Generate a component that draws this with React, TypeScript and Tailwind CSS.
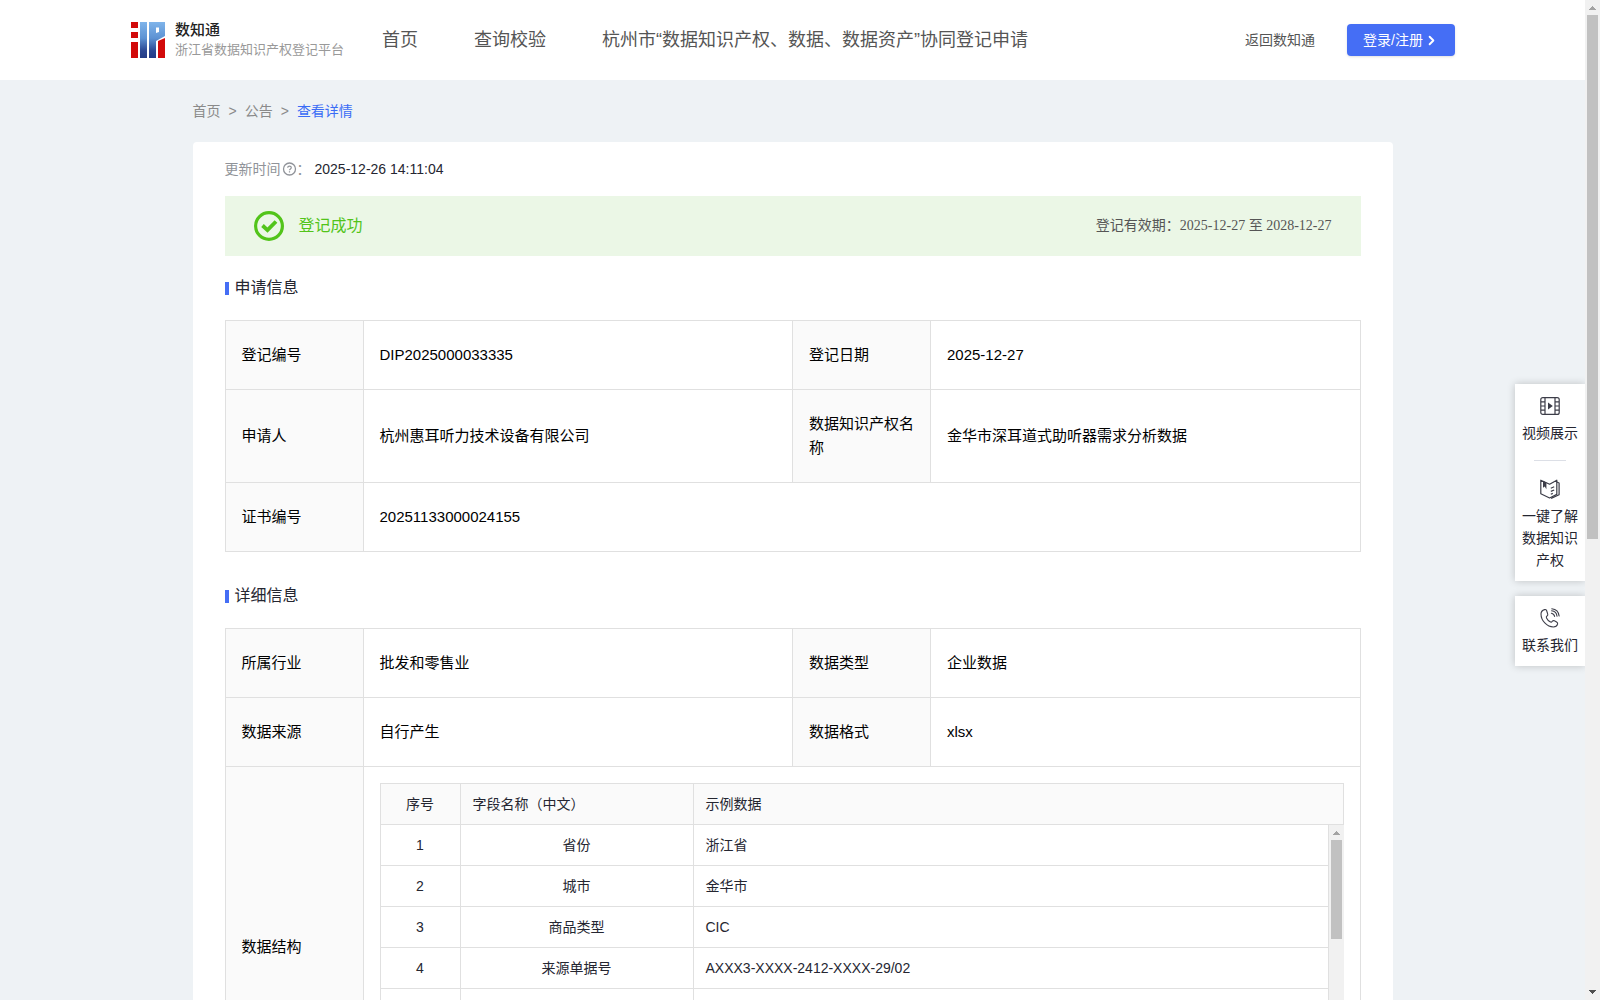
import { ChevronRight } from "lucide-react";
import clsx from "clsx";

type Cell = {
  label: string;
  value: string;
};

type Field = {
  index: string;
  name: string;
  sample: string;
};

const navItems = ["首页", "查询校验", "杭州市“数据知识产权、数据、数据资产”协同登记申请"];

const applyRows: Cell[][] = [
  [
    { label: "登记编号", value: "DIP2025000033335" },
    { label: "登记日期", value: "2025-12-27" },
  ],
  [
    { label: "申请人", value: "杭州惠耳听力技术设备有限公司" },
    { label: "数据知识产权名称", value: "金华市深耳道式助听器需求分析数据" },
  ],
  [{ label: "证书编号", value: "20251133000024155" }],
];

const detailRows: Cell[][] = [
  [
    { label: "所属行业", value: "批发和零售业" },
    { label: "数据类型", value: "企业数据" },
  ],
  [
    { label: "数据来源", value: "自行产生" },
    { label: "数据格式", value: "xlsx" },
  ],
];

const fields: Field[] = [
  { index: "1", name: "省份", sample: "浙江省" },
  { index: "2", name: "城市", sample: "金华市" },
  { index: "3", name: "商品类型", sample: "CIC" },
  { index: "4", name: "来源单据号", sample: "AXXX3-XXXX-2412-XXXX-29/02" },
];

const App = () => {
  return (
    <div className="flex h-screen overflow-hidden bg-[#eef2f5] font-['Liberation_Sans','Noto_Sans_CJK_SC',sans-serif] text-sm text-[#252631]">
      <div className="relative min-w-0 flex-1 overflow-hidden">
        <Header />
        <main className="mx-auto max-w-[1200px]">
          <Breadcrumb />
          <div className="rounded bg-white px-8 pt-4 pb-8">
            <div className="flex items-center leading-[22px]">
              <span className="text-[#909399]">更新时间</span>
              <QuestionIcon />
              <span className="text-[#909399]">：</span>
              <span className="ml-1">2025-12-26 14:11:04</span>
            </div>

            <div className="mt-4 flex h-[60px] items-center justify-between bg-[#ebf7e6] px-[29px]">
              <div className="flex items-center gap-[15px] text-base text-[#52c41a]">
                <SuccessIcon />
                <span>登记成功</span>
              </div>
              <div className="font-['Liberation_Serif','Noto_Sans_CJK_SC',serif] text-[#555]">
                登记有效期：2025-12-27 至 2028-12-27
              </div>
            </div>

            <SectionTitle className="mt-5">申请信息</SectionTitle>
            <InfoTable rows={applyRows} />

            <SectionTitle className="mt-8">详细信息</SectionTitle>
            <InfoTable rows={detailRows}>
              <tr>
                <LabelCell>数据结构</LabelCell>
                <td colSpan={3} className="border border-[#e0e0e0] p-4">
                  <FieldTable />
                </td>
              </tr>
            </InfoTable>
          </div>
        </main>
        <SideBar />
      </div>
      <Scrollbar thumbClass="h-[524px]" showDown />
    </div>
  );
};

const Header = () => (
  <header className="flex h-20 items-center bg-white px-[130px] whitespace-nowrap">
    <a href="#" className="flex items-center gap-2.5 pl-px">
      <Logo />
      <span className="flex flex-col">
        <span className="text-[15px] leading-5 font-medium text-[#222]">数知通</span>
        <span className="text-[13px] leading-5 text-[#999]">浙江省数据知识产权登记平台</span>
      </span>
    </a>
    <nav className="ml-[38px] flex gap-14 text-lg leading-6 text-[#555]">
      {navItems.map(item => (
        <a key={item} href="#">{item}</a>
      ))}
    </nav>
    <a href="#" className="ml-auto text-[#555]">返回数知通</a>
    <button className="ml-8 flex h-8 items-center gap-px rounded-sm bg-[#456ef5] px-4 text-white shadow-sm">
      登录/注册
      <ChevronRight size={15} strokeWidth={3} />
    </button>
  </header>
);

const Breadcrumb = () => (
  <nav className="flex gap-2 py-5 leading-[22px] text-[#8a8a8a]">
    <a href="#">首页</a>
    <span>&gt;</span>
    <a href="#">公告</a>
    <span>&gt;</span>
    <a href="#" className="text-[#3a6cf6]">查看详情</a>
  </nav>
);

const SectionTitle = ({ className, children }: { className?: string; children: React.ReactNode }) => (
  <h2 className={clsx("mb-5 flex items-center gap-1.5 text-base leading-6", className)}>
    <span className="h-[13px] w-1 bg-[#456ef5]" />
    {children}
  </h2>
);

const LabelCell = ({ children }: { children: React.ReactNode }) => (
  <th scope="row" className="border border-[#e0e0e0] bg-[#fafafa] px-4 py-[22px] text-left font-normal">
    {children}
  </th>
);

const InfoTable = ({ rows, children }: { rows: Cell[][]; children?: React.ReactNode }) => (
  <table className="w-full table-fixed border-collapse text-[15px] leading-6 text-black">
    <colgroup>
      <col className="w-[138px]" />
      <col />
      <col className="w-[138px]" />
      <col />
    </colgroup>
    <tbody>
      {rows.map(row => (
        <tr key={row[0].label}>
          {row.map(cell => [
            <LabelCell key={cell.label}>{cell.label}</LabelCell>,
            <td
              key={cell.value}
              colSpan={row.length === 1 ? 3 : 1}
              className="border border-[#e0e0e0] px-4 py-[22px]"
            >
              {cell.value}
            </td>,
          ])}
        </tr>
      ))}
      {children}
    </tbody>
  </table>
);

const FieldCols = () => (
  <colgroup>
    <col className="w-20" />
    <col className="w-[233px]" />
    <col />
  </colgroup>
);

const FieldTable = () => (
  <div className="text-sm leading-5 text-[#252631]">
    <table className="w-full table-fixed border-collapse bg-[#fafafa]">
      <FieldCols />
      <thead>
        <tr className="h-[41px]">
          <th className="border border-[#e0e0e0] px-3 text-center font-normal">序号</th>
          <th className="border border-[#e0e0e0] px-3 text-left font-normal">字段名称（中文）</th>
          <th className="border border-[#e0e0e0] px-3 text-left font-normal">示例数据</th>
        </tr>
      </thead>
    </table>
    <div className="flex h-[286px] overflow-hidden">
      <div className="min-w-0 flex-1">
        {/* top border tucks under the header's bottom border */}
        <table className="-mt-px w-full table-fixed border-collapse">
          <FieldCols />
          <tbody>
            {fields.map(field => (
              <tr key={field.index} className="h-[41px]">
                <td className="border border-[#e0e0e0] px-3 text-center">{field.index}</td>
                <td className="border border-[#e0e0e0] px-3 text-center">{field.name}</td>
                <td className="border border-[#e0e0e0] px-3">{field.sample}</td>
              </tr>
            ))}
            <tr className="h-[124px]">
              <td className="border border-[#e0e0e0]" />
              <td className="border border-[#e0e0e0]" />
              <td className="border border-[#e0e0e0]" />
            </tr>
          </tbody>
        </table>
      </div>
      <Scrollbar thumbClass="h-[99px]" />
    </div>
  </div>
);

const Scrollbar = ({ thumbClass, showDown }: { thumbClass: string; showDown?: boolean }) => (
  <div className="flex w-[15px] shrink-0 flex-col items-center bg-[#f1f1f1]">
    <svg className="h-[15px] w-[15px] shrink-0" viewBox="0 0 15 15" fill="#a3a3a3" shapeRendering="crispEdges">
      <path d="M7 6h1v1h1v1h1v1h1v1H4V9h1V8h1V7h1z" />
    </svg>
    <div className={clsx("w-[11px] shrink-0 bg-[#c1c1c1]", thumbClass)} />
    {showDown && (
      <svg className="mt-auto h-[15px] w-[15px] shrink-0" viewBox="0 0 15 15" fill="#505050" shapeRendering="crispEdges">
        <path d="M4 5h7v1h-1v1H9v1H8v1H7V8H6V7H5V6H4z" />
      </svg>
    )}
  </div>
);

// Floating shortcuts on the right edge
const SideBar = () => (
  <aside className="absolute top-96 right-0 w-[70px] text-center leading-[22px]">
    <div className="bg-white shadow-[0_0_8px_rgba(0,0,0,0.2)]">
      <a href="#" className="flex flex-col items-center gap-1.5 pt-3 pb-4">
        <VideoIcon />
        视频展示
      </a>
      <div className="mx-auto h-px w-8 bg-[#dcdfe6]" />
      <a href="#" className="flex flex-col items-center gap-1.5 px-1.5 pt-[18px] pb-2.5">
        <BookIcon />
        一键了解数据知识产权
      </a>
    </div>
    <a href="#" className="mt-[15px] flex flex-col items-center gap-1.5 bg-white pt-3 pb-2.5 shadow-[0_0_8px_rgba(0,0,0,0.2)]">
      <PhoneIcon />
      联系我们
    </a>
  </aside>
);

const Logo = () => (
  <svg width="34" height="36" viewBox="0 0 34 36" className="shrink-0">
    <defs>
      <linearGradient id="logo-blue" x1="0" y1="0" x2="0" y2="36" gradientUnits="userSpaceOnUse">
        <stop offset="0" stopColor="#7fb4ea" />
        <stop offset="0.45" stopColor="#5d92d3" />
        <stop offset="0.8" stopColor="#2b4793" />
        <stop offset="1" stopColor="#233b86" />
      </linearGradient>
    </defs>
    <path fill="#d20a0a" d="M0 0h7v6H0zM0 10h7v6H0zM0 20h7v16H0zM27 19l7-3v20h-7z" />
    <path fill="url(#logo-blue)" d="M9 0h7v36H9z" />
    <path fill="url(#logo-blue)" fillRule="evenodd" d="M18 0h16v14l-9 5v17h-7zM25 5.500v5.500l3-1V5.500z" />
  </svg>
);

const QuestionIcon = () => (
  <svg width="16" height="16" viewBox="0 0 16 16" fill="none" stroke="#909399" className="shrink-0">
    <circle cx="8.5" cy="8" r="6" strokeWidth="1.3" />
    <path d="M6.7 6.8c0-2.3 3.6-2.2 3.6-.1 0 1.2-1.8 1.300-1.800 2.600M8.500 10.300v1.200" strokeWidth="1.2" />
  </svg>
);

const SuccessIcon = () => (
  <svg width="30" height="30" viewBox="0 0 30 30" fill="none" stroke="#52c41a" className="shrink-0">
    <circle cx="15" cy="15" r="13.4" strokeWidth="3.2" />
    <path d="M8.500 14.500l5 4.700 8.500-8.700" strokeWidth="3.8" />
  </svg>
);

const VideoIcon = () => (
  <svg width="20" height="20" viewBox="0 0 20 20" fill="none" stroke="#3c3d48" strokeWidth="1.2">
    <rect x="0.8" y="1.6" width="18.4" height="16.8" rx="2" />
    <path d="M5 1.600v16.800M15 1.600v16.800M1 5.800h4M1 10h4M1 14.200h4M15 5.800h4M15 10h4M15 14.200h4" />
    <path d="M8 6.500v7l4.800-3.500z" fill="#3c3d48" stroke="none" />
  </svg>
);

const BookIcon = () => (
  <svg width="20" height="20" viewBox="0 0 20 20" fill="none" stroke="#3c3d48" strokeWidth="1.2" strokeLinejoin="round">
    <path d="M.8 1.200v13.600l8.800 4.200 7.200-3.600V1.200L9.600 5.200z" />
    <path d="M16.800 3l2.300 1v11.800l-8 3.600" />
    <path d="M10.800 9.200l3.400-1.400M10.800 12.400l3.400-1.400M10.800 15.200l2-.8" />
    <path d="M3 1.800v7l1.700-1.200 1.700 2.600V3.600z" fill="#3c3d48" stroke="none" />
  </svg>
);

const PhoneIcon = () => (
  <svg width="20" height="20" viewBox="0 0 20 20" fill="none" stroke="#3c3d48" strokeWidth="1.1" strokeLinecap="round">
    <path d="M4.600 1.600C2.400 2.200 1 3.800 1 6c0 6.600 6 13 12.400 13 2 0 3.600-1 4.200-2.800.3-1-.2-1.700-1-2.200l-2.200-1.200c-.8-.4-1.600-.2-2.100.5-.6 1-1.300 1.100-2.200.5-1.600-1-2.800-2.300-3.600-3.900-.4-.8-.2-1.400.5-1.900.8-.5 1-1.200.7-2L6.600 2.500c-.4-.8-1.100-1.100-2-.9z" />
    <path d="M11.400 5.200c1.700.3 2.900 1.500 3.200 3.200M11.600 2.800c3 .3 5.100 2.400 5.400 5.400M11.800.7c4 .4 6.900 3.300 7.300 7.300" />
  </svg>
);

export default App;
